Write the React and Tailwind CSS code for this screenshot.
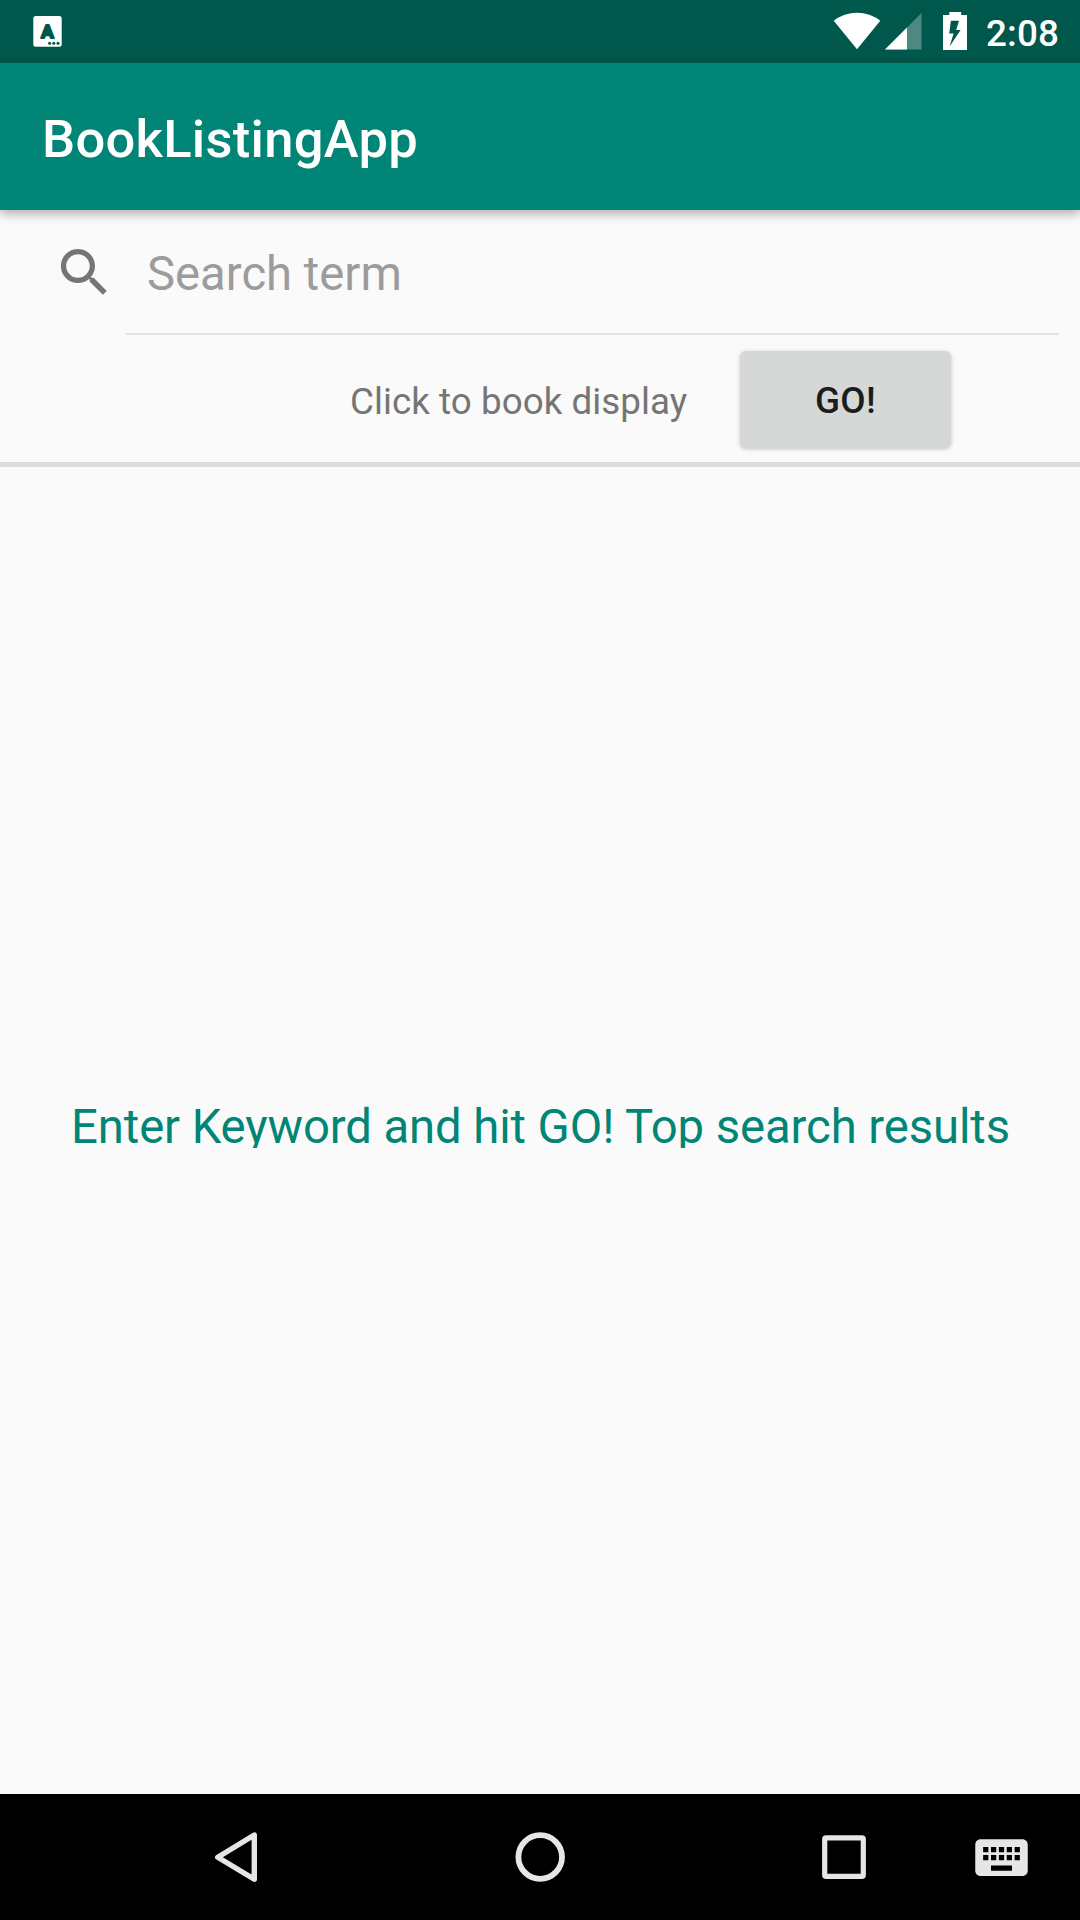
function StatusBar() {
  return (
    <div className="flex h-[63px] items-center bg-[#00574b] pl-[33px] pr-[21px]">
      <svg className="h-[63px] w-[30px]" viewBox="33 0 30 63">
        <rect x="33.3" y="16" width="28.4" height="30.8" rx="2.5" fill="#fff" />
        <text
          x="47.5"
          y="38"
          textAnchor="middle"
          fontFamily="Roboto, sans-serif"
          fontWeight="700"
          fontSize="19"
          fill="#00574b"
          stroke="#00574b"
          strokeWidth="2"
          strokeLinejoin="round"
        >
          A
        </text>
        <circle cx="49.6" cy="43.3" r="1.5" fill="#00574b" />
        <circle cx="53.8" cy="43.3" r="1.5" fill="#00574b" />
        <circle cx="58" cy="43.3" r="1.5" fill="#00574b" />
      </svg>
      <svg className="ml-auto h-[63px] w-[136px]" viewBox="832 0 136 63" fill="#fff">
        <path d="M857 49.3 833.7 20.7C840.5 15.6 848.5 12.8 857 12.8s16.5 2.8 23.3 7.9Z" />
        <path d="M885 49.5 921.5 13v36.5Z" fillOpacity=".3" />
        <path d="M885 49.5 907 27.5v22Z" />
        <path
          fillRule="evenodd"
          d="M949.3 12h11.9v3h5.8v35h-24V15h6.3ZM950.9 20.8 949.2 33.5H953.6L949.6 46.4 960.6 30H956.2L959 20.8Z"
        />
      </svg>
      <span className="ml-[18px] w-[73px] whitespace-nowrap pt-[4px] text-[36.75px] font-medium leading-[44px] tracking-[0.2px] text-white">
        2:08
      </span>
    </div>
  );
}

function NavBar() {
  return (
    <nav className="flex h-[126px] items-center bg-black text-[#e6e6e6]">
      <svg className="ml-[205px] h-[63px] w-[63px]" viewBox="205 1826 63 63" fill="none" stroke="currentColor" strokeWidth="5.4" strokeLinejoin="round">
        <path d="M217.8 1857.2 254.3 1835v44.2Z" />
      </svg>
      <svg className="ml-[241px] h-[63px] w-[63px]" viewBox="509 1826 63 63" fill="none" stroke="currentColor" strokeWidth="5.8">
        <circle cx="540.2" cy="1857" r="21.8" />
      </svg>
      <svg className="ml-[241px] h-[63px] w-[63px]" viewBox="813 1826 63 63" fill="none" stroke="currentColor" strokeWidth="5.2">
        <rect x="824.7" y="1837.8" width="38.6" height="38.6" rx="1.5" />
      </svg>
      <svg className="ml-[94px] h-[63px] w-[63px]" viewBox="0 0 24 24" fill="currentColor">
        <path d="M20 5H4c-1.1 0-1.99.9-1.99 2L2 17c0 1.1.9 2 2 2h16c1.1 0 2-.9 2-2V7c0-1.1-.9-2-2-2zm-9 3h2v2h-2V8zm0 3h2v2h-2v-2zM8 8h2v2H8V8zm0 3h2v2H8v-2zm-1 2H5v-2h2v2zm0-3H5V8h2v2zm9 7H8v-2h8v2zm0-4h-2v-2h2v2zm0-3h-2V8h2v2zm3 3h-2v-2h2v2zm0-3h-2V8h2v2z" />
      </svg>
    </nav>
  );
}

export default function App() {
  return (
    <div className="flex h-[1920px] w-[1080px] flex-col overflow-hidden bg-[#fafafa] font-['Roboto',sans-serif]">
      <StatusBar />
      <header className="z-10 flex h-[147px] items-center bg-[#008577] pl-[42px] pt-[4px] shadow-[0_4px_10px_rgba(0,0,0,0.3)]">
        <h1 className="whitespace-nowrap text-[52.5px] font-medium leading-[62px] tracking-[0.28px] text-white">BookListingApp</h1>
      </header>

      <section className="flex h-[257px] flex-col border-b-[5px] border-[#dcdcdc]">
        <div className="flex h-[125px] pl-[53px] pr-[21px]">
          <svg className="mt-[31px] h-[63px] w-[63px] shrink-0" viewBox="0 0 24 24" fill="#757575">
            <path d="M15.5 14h-.79l-.28-.27C15.41 12.59 16 11.11 16 9.5 16 5.91 13.09 3 9.5 3S3 5.91 3 9.5 5.91 16 9.5 16c1.61 0 3.09-.59 4.23-1.57l.27.28v.79l5 4.99L20.49 19l-4.99-5zm-6 0C7.01 14 5 11.99 5 9.5S7.01 5 9.5 5 14 7.01 14 9.5 11.99 14 9.5 14z" />
          </svg>
          <div className="ml-[10px] flex-1 border-b-2 border-[#e0e2e1] pl-[21px] pt-[36px] text-[47.25px] leading-[56px] text-[#9c9c9c]">
            Search term
          </div>
        </div>
        <div className="flex flex-1 items-start">
          <span className="ml-[350px] mt-[45px] w-[390px] whitespace-nowrap text-[36.75px] leading-[43px] tracking-[0.05px] text-[#757575]">
            Click to book display
          </span>
          <button className="mt-[16px] h-[97px] w-[211px] rounded-[6px] bg-[#d6d8d7] pt-[2px] text-[36.75px] font-medium leading-[43px] tracking-[0.3px] text-[#1c1d1d] shadow-[0_1px_4px_rgba(0,0,0,0.22)]">
            GO!
          </button>
        </div>
      </section>

      <main className="flex flex-1 flex-col pt-[633px]">
        <p className="ml-[71px] h-[48px] overflow-hidden whitespace-nowrap text-[47.25px] leading-[55px] tracking-[-0.09px] text-[#008577]">
          Enter Keyword and hit GO! Top search results
        </p>
      </main>
      <NavBar />
    </div>
  );
}
